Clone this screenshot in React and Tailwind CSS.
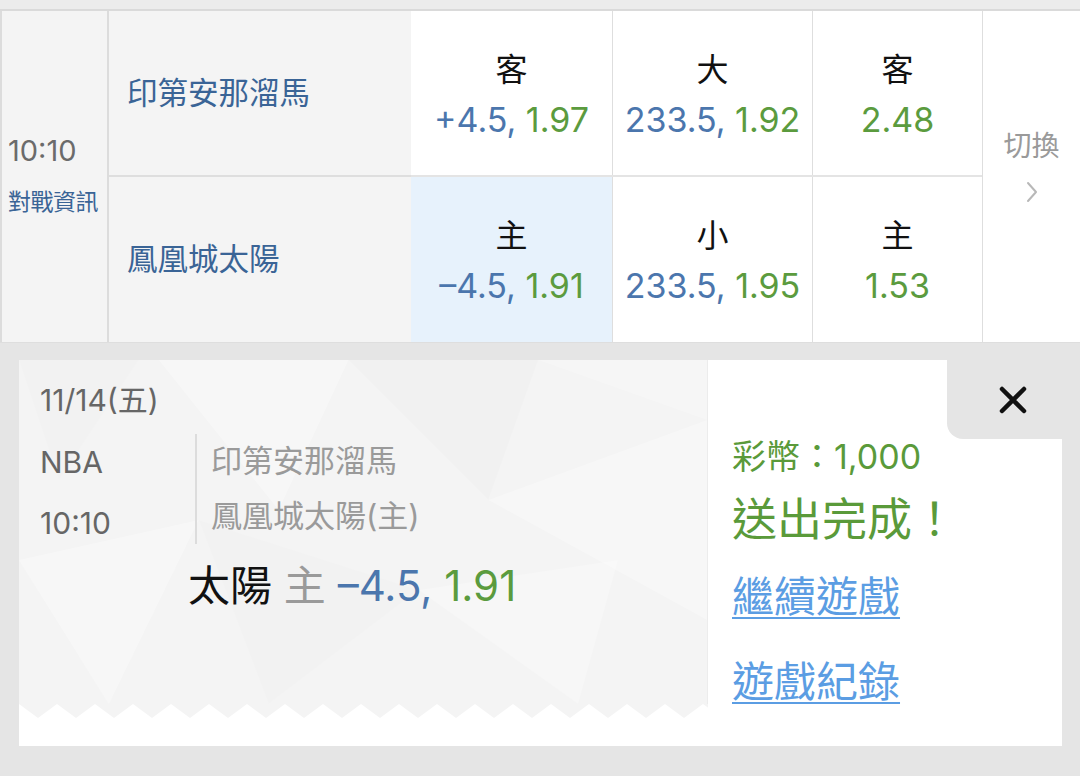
import React from "react";

const FONT = { fontFamily: 'Inter, "Noto Sans CJK TC", sans-serif' };

const rows = [
  {
    team: "印第安那溜馬",
    cells: [
      { label: "客", line: "+4.5", odds: "1.97" },
      { label: "大", line: "233.5", odds: "1.92" },
      { label: "客", odds: "2.48" },
    ],
  },
  {
    team: "鳳凰城太陽",
    cells: [
      { label: "主", line: "–4.5", odds: "1.91", picked: true },
      { label: "小", line: "233.5", odds: "1.95" },
      { label: "主", odds: "1.53" },
    ],
  },
];

const colWidths = ["w-[202px]", "w-[200px]", "w-[169px]"];

const OddsCell = ({ cell, width, last }) => (
  <div
    className={`${width} h-full flex flex-col items-center justify-center pt-[6px] ${
      last ? "" : "border-r"
    } border-[#dedede] ${cell.picked ? "bg-[#e7f2fc]" : "bg-white"}`}
  >
    <div className="text-[32px] leading-[48px] text-[#111]">{cell.label}</div>
    <div className="text-[34px] leading-[52px]">
      {cell.line && <span className="text-[#4b76ad]">{cell.line}, </span>}
      <span className="text-[#5b9b3e]">{cell.odds}</span>
    </div>
  </div>
);

const Facets = () => (
  <svg
    className="absolute inset-0 w-full h-full"
    viewBox="0 0 689 344"
    preserveAspectRatio="none"
  >
    <polygon points="0,0 120,0 40,120" fill="#000" fillOpacity="0.008" />
    <polygon points="140,0 330,0 260,150" fill="#fff" fillOpacity="0.3" />
    <polygon points="330,0 520,0 470,140" fill="#000" fillOpacity="0.01" />
    <polygon points="470,140 689,60 689,260" fill="#fff" fillOpacity="0.28" />
    <polygon points="0,200 180,160 90,344" fill="#fff" fillOpacity="0.3" />
    <polygon points="180,160 400,230 250,344" fill="#000" fillOpacity="0.008" />
    <polygon points="400,230 600,200 560,344" fill="#fff" fillOpacity="0.25" />
    <polygon points="520,0 689,0 689,60" fill="#fff" fillOpacity="0.2" />
  </svg>
);

const Zigzag = () => (
  <svg className="block w-full h-[14px]" viewBox="0 0 689 14" preserveAspectRatio="none">
    <defs>
      <pattern id="teeth" width="38" height="14" patternUnits="userSpaceOnUse">
        <polygon points="0,0 38,0 19,14" fill="#f4f4f4" />
      </pattern>
    </defs>
    <rect width="689" height="14" fill="url(#teeth)" />
  </svg>
);

export default function App() {
  return (
    <div className="w-[1080px] h-[776px] bg-[#e5e5e5] overflow-hidden" style={FONT}>
      {/* top strip */}
      <div className="h-[11px] bg-[#ececec] border-b-2 border-[#dadada]" />

      {/* game row */}
      <div className="flex h-[332px] border-b border-[#dedede]">
        <div className="w-[109px] bg-[#f4f4f4] border-l-2 border-r-2 border-[#dcdcdc] flex flex-col justify-center pl-[6px] pb-[2px]">
          <div className="text-[29px] leading-[32px] text-[#6b6b6b]">10:10</div>
          <div className="text-[23px] leading-[30px] mt-[20px] text-[#3a6496] tracking-[-0.5px]">對戰資訊</div>
        </div>

        <div className="w-[302px] bg-[#f4f4f4] flex flex-col">
          {rows.map((r, i) => (
            <div
              key={r.team}
              className={`h-[166px] flex items-center pl-[18px] text-[30.5px] text-[#3a6496] ${
                i === 0 ? "border-b-2 border-[#dedede]" : ""
              }`}
            >
              {r.team}
            </div>
          ))}
        </div>

        <div className="flex flex-col">
          {rows.map((r, i) => (
            <div
              key={r.team}
              className={`h-[166px] flex ${i === 0 ? "border-b-2 border-[#e4e4e4]" : ""}`}
            >
              {r.cells.map((c, j) => (
                <OddsCell key={j} cell={c} width={colWidths[j]} last={j === 2} />
              ))}
            </div>
          ))}
        </div>

        <div className="flex-1 bg-white border-l border-[#dedede] flex flex-col items-center justify-center pb-[22px]">
          <div className="text-[28px] leading-[36px] text-[#9a9a9a]">切換</div>
          <svg className="mt-[16px]" width="14" height="24" viewBox="0 0 14 24" fill="none">
            <path d="M3 3 L11 12 L3 21" stroke="#b8b8b8" strokeWidth="2" strokeLinecap="round" strokeLinejoin="round" />
          </svg>
        </div>
      </div>

      {/* bet confirmation card */}
      <div className="mt-[17px] ml-[19px] w-[1043px] h-[386px] bg-white flex">
        <div className="w-[689px] flex flex-col">
          <div className="relative h-[344px] bg-[#f4f4f4] border-r border-[#ececec] px-[21px] pt-[22px]">
            <Facets />
            <div className="relative">
              <div className="text-[30px] leading-[36px] text-[#666]">11/14(五)</div>
              <div className="flex mt-[16px]">
                <div className="w-[155px] text-[30px] text-[#666] pt-[8px]">
                  <div className="leading-[40px]">NBA</div>
                  <div className="leading-[40px] mt-[21px]">10:10</div>
                </div>
                <div className="h-[110px] border-l-2 border-[#dcdcdc] pl-[14px] pt-[7px] text-[31px] text-[#9a9a9a]">
                  <div className="leading-[40px]">印第安那溜馬</div>
                  <div className="leading-[40px] mt-[15px]">鳳凰城太陽(主)</div>
                </div>
              </div>
              <div className="ml-[148px] mt-[16px] text-[42px] leading-[52px]">
                <span className="text-[#111]">太陽</span>
                <span className="text-[#9a9a9a]"> 主 </span>
                <span className="text-[#4b76ad]">–4.5, </span>
                <span className="text-[#5b9b3e]">1.91</span>
              </div>
            </div>
          </div>
          <Zigzag />
        </div>

        <div className="relative flex-1 pl-[24px] pt-[77px]">
          <div className="absolute top-0 right-0 w-[115px] h-[79px] bg-[#e5e5e5] rounded-bl-[16px] flex items-center justify-end pr-[35px]">
            <svg width="28" height="28" viewBox="0 0 28 28">
              <path d="M3 3 L25 25 M25 3 L3 25" stroke="#111" strokeWidth="4.5" strokeLinecap="round" />
            </svg>
          </div>
          <div className="text-[34px] leading-[40px] text-[#5a9a3a]">彩幣：1,000</div>
          <div className="mt-[14px] text-[45px] leading-[58px] text-[#5a9a3a]">送出完成！</div>
          <div className="mt-[21px] text-[42px] leading-[54px] text-[#5b9de3] underline underline-offset-[5px] decoration-2">
            繼續遊戲
          </div>
          <div className="mt-[31px] text-[42px] leading-[54px] text-[#5b9de3] underline underline-offset-[5px] decoration-2">
            遊戲紀錄
          </div>
        </div>
      </div>
    </div>
  );
}
